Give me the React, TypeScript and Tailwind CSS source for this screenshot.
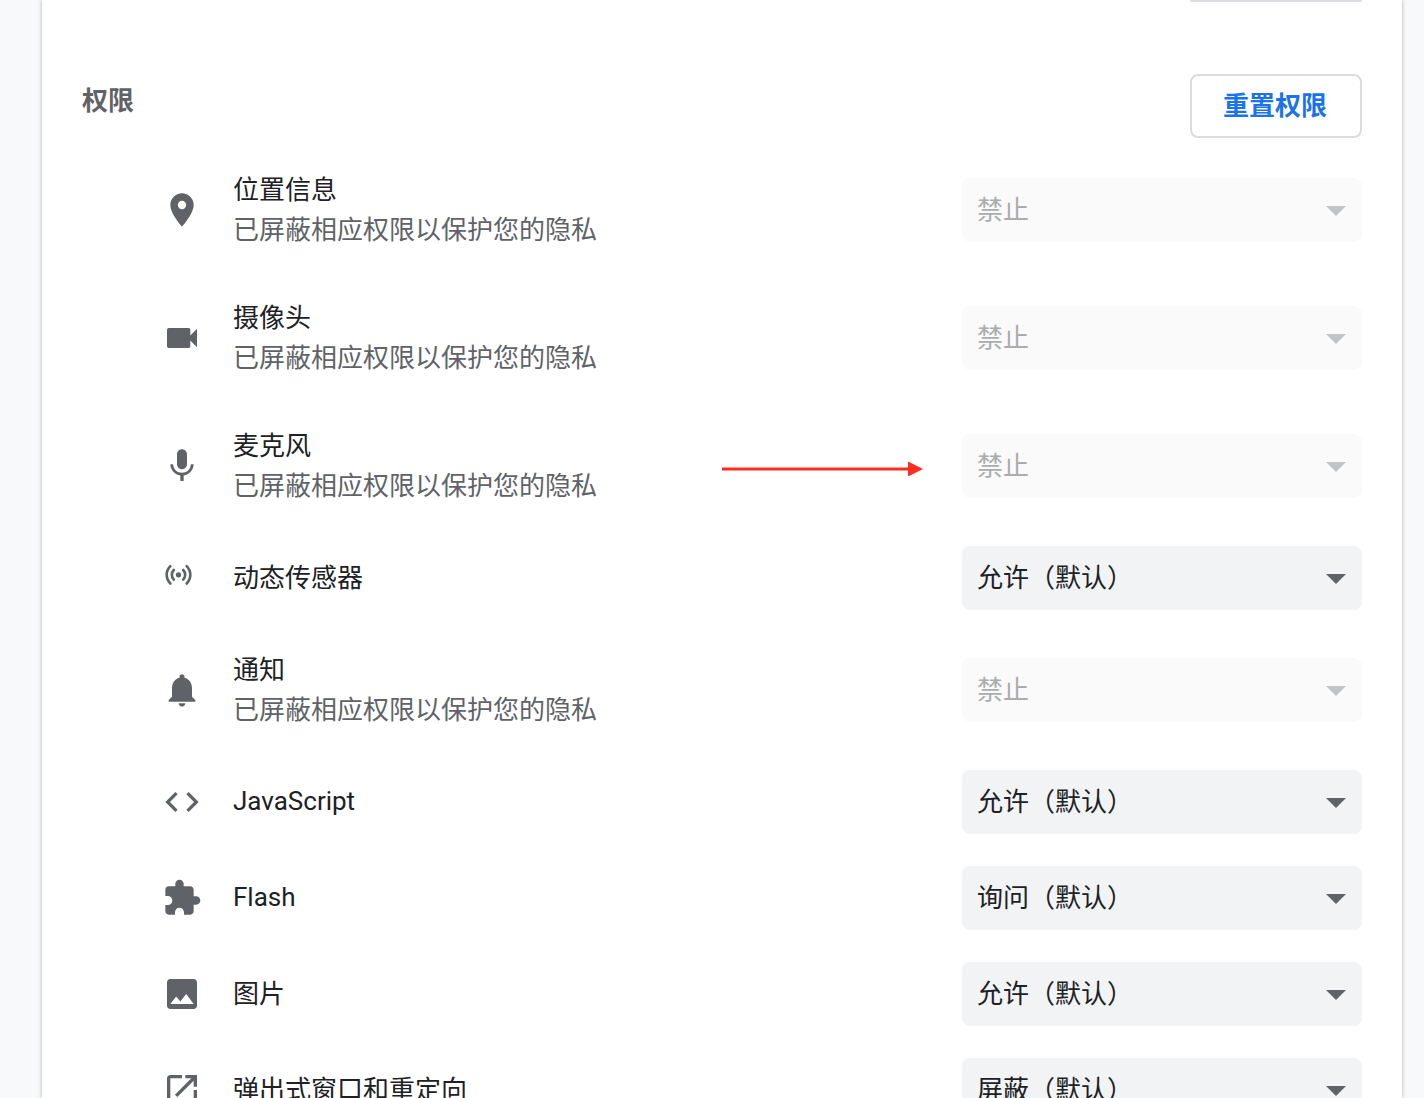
const font = "font-['Roboto','Noto_Sans_CJK_SC',sans-serif]";

const blocked = "已屏蔽相应权限以保护您的隐私";

const icons: Record<string, JSX.Element> = {
  place: <path d="M12 2C8.13 2 5 5.13 5 9c0 5.25 7 13 7 13s7-7.75 7-13c0-3.87-3.13-7-7-7zm0 9.5a2.5 2.5 0 0 1 0-5 2.5 2.5 0 0 1 0 5z" />,
  videocam: <path d="M17 10.5V7c0-.55-.45-1-1-1H4c-.55 0-1 .45-1 1v10c0 .55.45 1 1 1h12c.55 0 1-.45 1-1v-3.5l4 4v-11l-4 4z" />,
  mic: <path d="M12 14c1.66 0 3-1.34 3-3V5c0-1.66-1.34-3-3-3S9 3.34 9 5v6c0 1.66 1.34 3 3 3zm5.3-3c0 3-2.54 5.1-5.3 5.1S6.7 14 6.7 11H5c0 3.41 2.72 6.23 6 6.72V21h2v-3.28c3.28-.48 6-3.3 6-6.72h-1.7z" />,
  sensors: (
    <g>
      <circle cx="9.9" cy="10.1" r="1.6" />
      <path d="M7.1 7.2a4.1 4.1 0 0 0 0 5.8M12.7 7.2a4.1 4.1 0 0 1 0 5.8M5 4.9a7.3 7.3 0 0 0 0 10.4M14.8 4.9a7.3 7.3 0 0 1 0 10.4" fill="none" stroke="#5f6368" strokeWidth="1.6" strokeLinecap="round" />
    </g>
  ),
  bell: <path d="M12 22c1.1 0 2-.9 2-2h-4c0 1.1.9 2 2 2zm6-6v-5c0-3.07-1.63-5.64-4.5-6.32V4c0-.83-.67-1.5-1.5-1.5s-1.5.67-1.5 1.5v.68C7.64 5.36 6 7.92 6 11v5l-2 2v1h16v-1l-2-2z" />,
  code: <path d="M9.4 16.6L4.8 12l4.6-4.6L8 6l-6 6 6 6 1.4-1.4zm5.2 0l4.6-4.6-4.6-4.6L16 6l6 6-6 6-1.4-1.4z" />,
  extension: <path d="M20.5 11H19V7c0-1.1-.9-2-2-2h-4V3.5C13 2.12 11.88 1 10.5 1S8 2.12 8 3.5V5H4c-1.1 0-1.99.9-1.99 2v3.8H3.5c1.49 0 2.7 1.21 2.7 2.7s-1.21 2.7-2.7 2.7H2V20c0 1.1.9 2 2 2h3.8v-1.5c0-1.49 1.21-2.7 2.7-2.7 1.49 0 2.7 1.21 2.7 2.7V22H17c1.1 0 2-.9 2-2v-4h1.5c1.38 0 2.5-1.12 2.5-2.5S21.88 11 20.5 11z" />,
  image: <path d="M21 19V5c0-1.1-.9-2-2-2H5c-1.1 0-2 .9-2 2v14c0 1.1.9 2 2 2h14c1.1 0 2-.9 2-2zM8.5 13.5l2.5 3.01L14.5 12l4.5 6H5l3.5-4.5z" />,
  popup: <path d="M19 19H5V5h7V3H5c-1.11 0-2 .9-2 2v14c0 1.1.89 2 2 2h14c1.1 0 2-.9 2-2v-7h-2v7zM14 3v2h3.59l-9.83 9.83 1.41 1.41L19 6.41V10h2V3h-7z" />,
};

const rows = [
  { icon: "place", label: "位置信息", sub: blocked, value: "禁止", disabled: true },
  { icon: "videocam", label: "摄像头", sub: blocked, value: "禁止", disabled: true },
  { icon: "mic", label: "麦克风", sub: blocked, value: "禁止", disabled: true },
  { icon: "sensors", label: "动态传感器", value: "允许（默认）" },
  { icon: "bell", label: "通知", sub: blocked, value: "禁止", disabled: true },
  { icon: "code", label: "JavaScript", value: "允许（默认）", latin: true },
  { icon: "extension", label: "Flash", value: "询问（默认）", latin: true },
  { icon: "image", label: "图片", value: "允许（默认）" },
  { icon: "popup", label: "弹出式窗口和重定向", value: "屏蔽（默认）" },
];

const Select = ({ value, disabled }: { value: string; disabled?: boolean }) => (
  <div
    className={`flex h-16 w-[400px] shrink-0 items-center justify-between rounded-lg pl-[15px] pr-4 ${
      disabled ? "bg-[#fafafb]" : "bg-[#f1f3f4]"
    }`}
  >
    <span className={`text-[26px] leading-10 ${disabled ? "text-[#abacad]" : "text-[#202124]"}`}>{value}</span>
    <svg width="20" height="10" viewBox="0 0 20 10" className="mt-[2px]">
      <path d="M0 0h20L10 10z" fill={disabled ? "#c2c3c4" : "#5f6368"} />
    </svg>
  </div>
);

const App = () => {
  return (
    <div className={`h-[1098px] overflow-hidden bg-[#f8f9fa] px-[42px] ${font}`}>
      <div className="relative h-[1098px] w-[1360px] bg-white px-10 shadow-[0_0_4px_rgba(60,64,67,0.4)]">
        {/* bottom edge of the button above */}
        <div className="ml-auto h-[2px] w-[172px] rounded-b-md bg-[#dadce0]" />

        <div className="mt-[72px] flex items-start justify-between">
          <h2 className="pt-[7px] text-[26px] font-semibold leading-10 text-[#5f6368]">权限</h2>
          <button className="h-16 w-[172px] rounded-lg border-2 border-[#dadce0] bg-white pr-[2px] text-[26px] font-semibold text-[#1a73e8]">
            重置权限
          </button>
        </div>

        <div className="mt-2">
          {rows.map((row) => (
            <div key={row.label} className={`flex items-center ${row.sub ? "h-32" : "h-24"}`}>
              <svg width="40" height="40" viewBox="0 0 24 24" fill="#5f6368" className="ml-20 shrink-0">
                {icons[row.icon]}
              </svg>
              <div className={`ml-[31px] flex-1 text-[26px] leading-10 ${row.latin ? "-mt-[2px]" : ""}`}>
                <div className="text-[#202124]">{row.label}</div>
                {row.sub && <div className="text-[#5f6368]">{row.sub}</div>}
              </div>
              <Select value={row.value} disabled={row.disabled} />
            </div>
          ))}
        </div>

        {/* red annotation arrow */}
        <svg width="204" height="16" viewBox="0 0 204 16" className="absolute left-[680px] top-[461px]">
          <path d="M0 6.5h188v3H0z" fill="#ff2d20" />
          <path d="M186 0.5l15 7.5-15 7.5z" fill="#ff2d20" />
        </svg>
      </div>
    </div>
  );
};

export default App;
